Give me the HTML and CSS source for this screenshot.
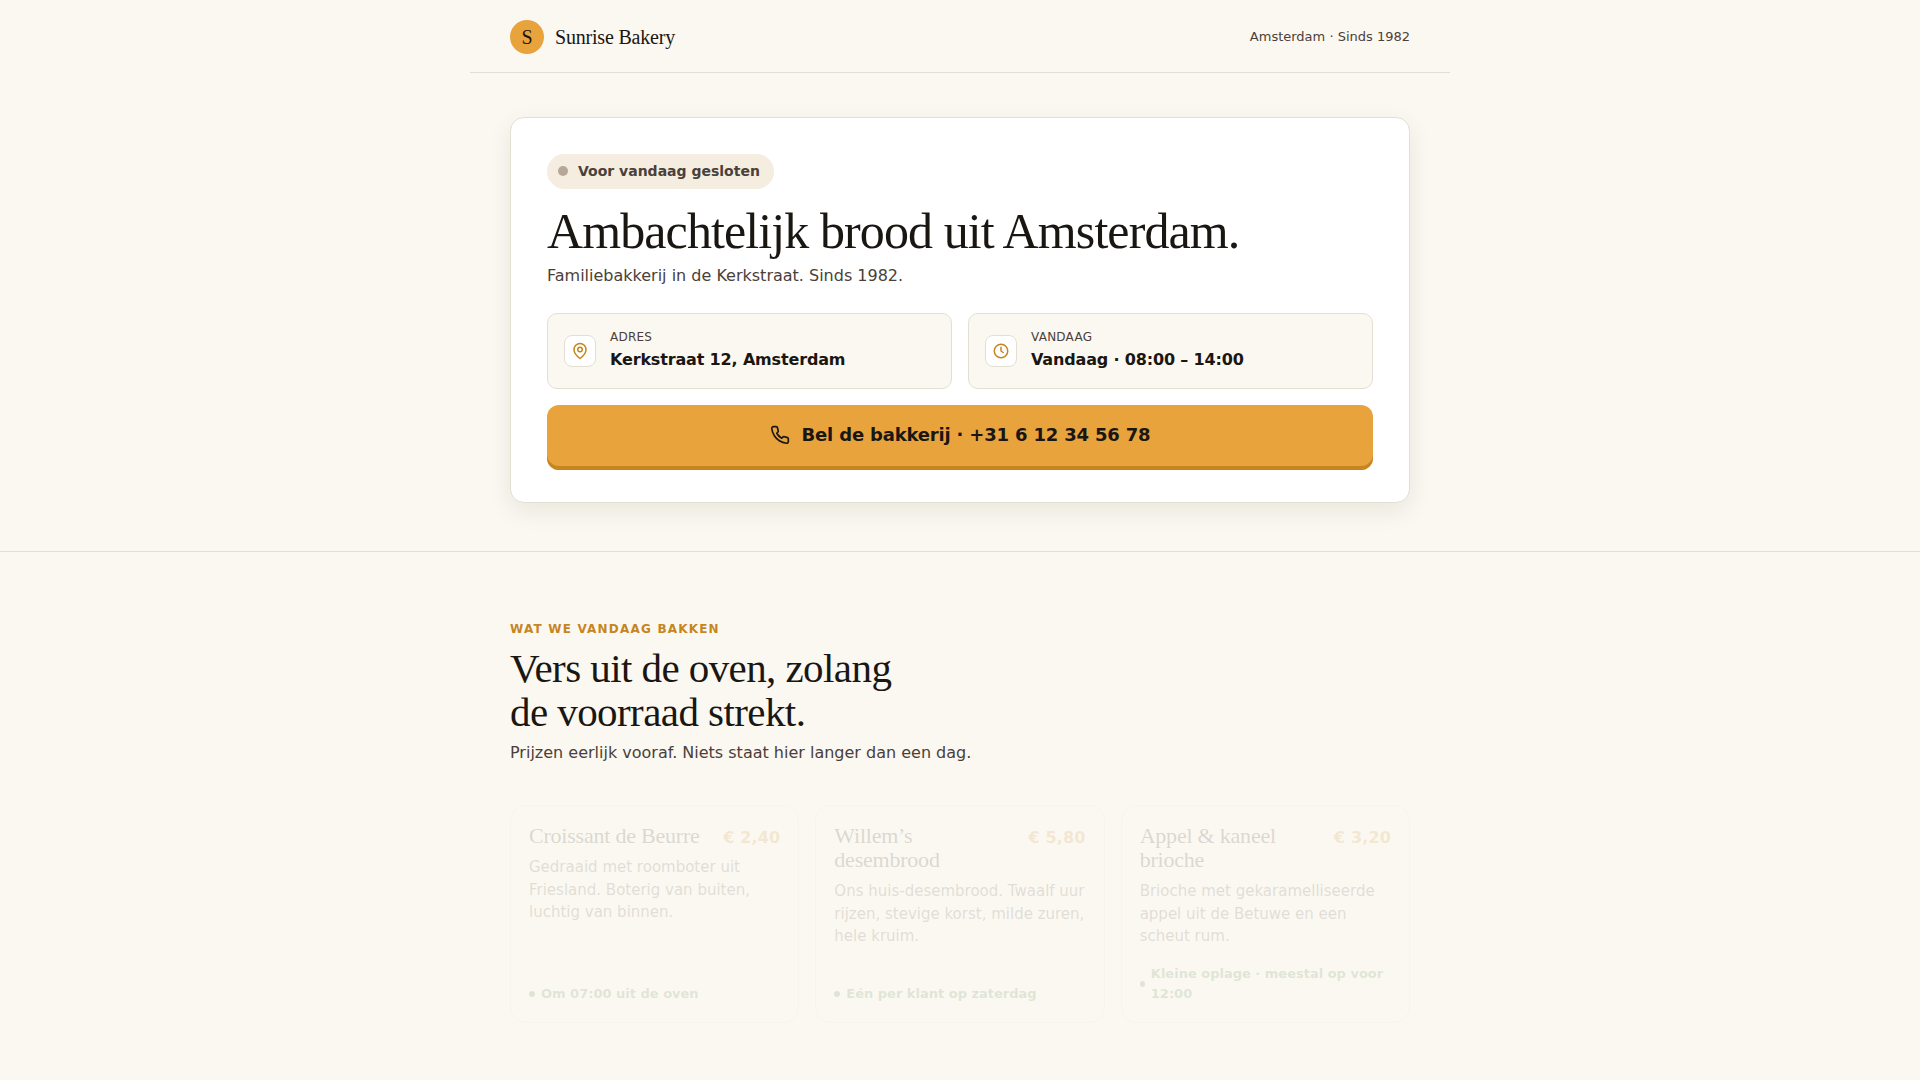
FILE: index.html
```html
<!DOCTYPE html>
<html lang="nl">
<head>
<meta charset="utf-8">
<meta name="viewport" content="width=device-width, initial-scale=1">
<title>Sunrise Bakery</title>
<link rel="stylesheet" href="styles.css">
</head>
<body>
<header class="site-header">
  <div class="brand"><span class="brand-mark">S</span><span class="brand-name">Sunrise Bakery</span></div>
  <span class="site-meta">Amsterdam · Sinds 1982</span>
</header>
<main>
  <section class="hero">
    <div class="hero-card">
      <div class="status"><span class="status-dot"></span>Voor vandaag gesloten</div>
      <h1 class="hero-title">Ambachtelijk brood uit Amsterdam.</h1>
      <p class="lead">Familiebakkerij in de Kerkstraat. Sinds 1982.</p>
      <div class="facts">
        <div class="fact">
          <span class="fact-icon">
            <svg class="icon" viewBox="0 0 24 24" width="18" height="18"><path d="M20 10c0 6-8 12-8 12s-8-6-8-12a8 8 0 0 1 16 0Z"/><circle cx="12" cy="10" r="3"/></svg>
          </span>
          <div>
            <div class="fact-label">Adres</div>
            <div class="fact-value">Kerkstraat 12, Amsterdam</div>
          </div>
        </div>
        <div class="fact">
          <span class="fact-icon">
            <svg class="icon" viewBox="0 0 24 24" width="18" height="18"><circle cx="12" cy="12" r="9"/><path d="M12 7v5l3 2"/></svg>
          </span>
          <div>
            <div class="fact-label">Vandaag</div>
            <div class="fact-value">Vandaag · 08:00 – 14:00</div>
          </div>
        </div>
      </div>
      <a class="call" href="tel:+31612345678">
        <svg class="icon" viewBox="0 0 24 24" width="20" height="20"><path d="M22 16.920v3a2 2 0 0 1-2.180 2 19.790 19.790 0 0 1-8.630-3.070 19.500 19.500 0 0 1-6-6 19.790 19.790 0 0 1-3.070-8.670A2 2 0 0 1 4.110 2h3a2 2 0 0 1 2 1.720 12.840 12.840 0 0 0 .7 2.810 2 2 0 0 1-.45 2.110L8.090 9.910a16 16 0 0 0 6 6l1.270-1.270a2 2 0 0 1 2.110-.45 12.840 12.840 0 0 0 2.810.7A2 2 0 0 1 22 16.920z"/></svg>
        <span>Bel de bakkerij · +31 6 12 34 56 78</span>
      </a>
    </div>
  </section>
  <section class="products">
    <div class="eyebrow">Wat we vandaag bakken</div>
    <h2 class="section-title">Vers uit de oven, zolang<br>de voorraad strekt.</h2>
    <p class="lead">Prijzen eerlijk vooraf. Niets staat hier langer dan een dag.</p>
    <div class="product-grid">
      <article class="product">
        <div class="product-head"><h3 class="product-name">Croissant de Beurre</h3><span class="price">€ 2,40</span></div>
        <p class="product-text">Gedraaid met roomboter uit Friesland. Boterig van buiten, luchtig van binnen.</p>
        <div class="note"><span class="note-dot"></span>Om 07:00 uit de oven</div>
      </article>
      <article class="product">
        <div class="product-head"><h3 class="product-name">Willem’s desembrood</h3><span class="price">€ 5,80</span></div>
        <p class="product-text">Ons huis-desembrood. Twaalf uur rijzen, stevige korst, milde zuren, hele kruim.</p>
        <div class="note"><span class="note-dot"></span>Eén per klant op zaterdag</div>
      </article>
      <article class="product">
        <div class="product-head"><h3 class="product-name">Appel &amp; kaneel brioche</h3><span class="price">€ 3,20</span></div>
        <p class="product-text">Brioche met gekaramelliseerde appel uit de Betuwe en een scheut rum.</p>
        <div class="note"><span class="note-dot"></span>Kleine oplage · meestal op voor 12:00</div>
      </article>
    </div>
  </section>
</main>
</body>
</html>
```
FILE: styles.css
```css
:root {
  --cream: #fbf8f1;
  --ink: #1a1612;
  --muted: #4a4039;
  --line: #e4dfd3;
  --gold: #e8a33d;
  --gold-dark: #c6851f;
  --serif: "Liberation Serif", serif;
}
* { box-sizing: border-box; }
body {
  margin: 0;
  background: var(--cream);
  color: var(--ink);
  font: 16px/24px "DejaVu Sans", sans-serif;
}
h1, h2, h3, p { margin: 0; }
.icon {
  flex: none;
  fill: none;
  stroke: currentColor;
  stroke-width: 2;
  stroke-linecap: round;
  stroke-linejoin: round;
}
.site-header {
  display: flex;
  align-items: center;
  justify-content: space-between;
  max-width: 980px;
  margin: 0 auto;
  padding: 20px 40px 18px;
  border-bottom: 1px solid var(--line);
}
.brand { display: flex; align-items: center; gap: 11px; font-family: var(--serif); font-size: 20px; }
.brand-name { letter-spacing: -0.01em; }
.brand-mark {
  display: grid;
  place-items: center;
  width: 34px;
  height: 34px;
  border-radius: 50%;
  background: var(--gold);
}
.site-meta { color: var(--muted); font-size: 13px; }
.hero { padding: 44px 40px 48px; border-bottom: 1px solid var(--line); }
.hero-card {
  max-width: 900px;
  margin: 0 auto;
  padding: 36px 36px 32px;
  background: #fff;
  border: 1px solid var(--line);
  border-radius: 14px;
  box-shadow: 0 8px 24px rgba(26, 22, 18, 0.08);
}
.status {
  display: flex;
  align-items: center;
  gap: 10px;
  width: fit-content;
  padding: 5px 14px 6px 11px;
  border-radius: 18px;
  background: #f4ede0;
  color: var(--muted);
  font-size: 14px;
  font-weight: 700;
}
.status-dot { width: 10px; height: 10px; border-radius: 50%; background: #b5a898; }
.hero-title {
  margin-top: 14px;
  font: 400 50px/56px var(--serif);
  letter-spacing: -0.018em;
}
.lead { margin-top: 5px; color: var(--muted); }
.facts { display: grid; grid-template-columns: 1fr 1fr; gap: 16px; margin: 25px 0 16px; }
.fact {
  display: flex;
  align-items: center;
  gap: 14px;
  padding: 15px 16px;
  background: var(--cream);
  border: 1px solid var(--line);
  border-radius: 10px;
}
.fact-icon {
  display: grid;
  place-items: center;
  width: 32px;
  height: 32px;
  background: #fff;
  border: 1px solid var(--line);
  border-radius: 8px;
  color: var(--gold-dark);
}
.fact-label { color: var(--muted); font-size: 12px; line-height: 16px; letter-spacing: 0.02em; text-transform: uppercase; }
.fact-value { padding-top: 2px; font-weight: 700; line-height: 26px; letter-spacing: -0.01em; }
.call {
  display: flex;
  align-items: center;
  justify-content: center;
  gap: 12px;
  padding: 18px 16px 23px;
  border-radius: 12px;
  background: var(--gold);
  box-shadow: inset 0 -4px 0 var(--gold-dark);
  color: var(--ink);
  font-size: 18px;
  font-weight: 700;
  letter-spacing: -0.01em;
  text-decoration: none;
}
.products { max-width: 980px; margin: 0 auto; padding: 68px 40px 56px; }
.eyebrow {
  color: var(--gold-dark);
  font-size: 12px;
  font-weight: 700;
  line-height: 18px;
  letter-spacing: 0.1em;
  text-transform: uppercase;
}
.section-title { margin: 8px 0 7px; font: 400 41px/44px var(--serif); letter-spacing: -0.014em; }
.product-grid { display: grid; grid-template-columns: repeat(3, 1fr); gap: 16px; margin-top: 40px; }
.product {
  display: flex;
  flex-direction: column;
  padding: 18px;
  background: #fffdf7;
  border: 1px solid var(--line);
  border-radius: 16px;
  opacity: 0.14;
}
.product-head { display: flex; align-items: baseline; justify-content: space-between; gap: 12px; }
.product-name { font: 400 22px/24px var(--serif); letter-spacing: -0.01em; }
.price { flex: none; color: var(--gold-dark); font-weight: 700; line-height: 20px; letter-spacing: 0.01em; }
.product-text { margin-top: 8px; color: var(--muted); font-size: 15px; line-height: 1.5; }
.note {
  display: flex;
  align-items: center;
  gap: 6px;
  margin-top: auto;
  padding-top: 16px;
  color: #3f7a3a;
  font-size: 13px;
  font-weight: 700;
  line-height: 20px;
}
.note-dot { width: 6px; height: 6px; border-radius: 50%; background: currentColor; }
```
